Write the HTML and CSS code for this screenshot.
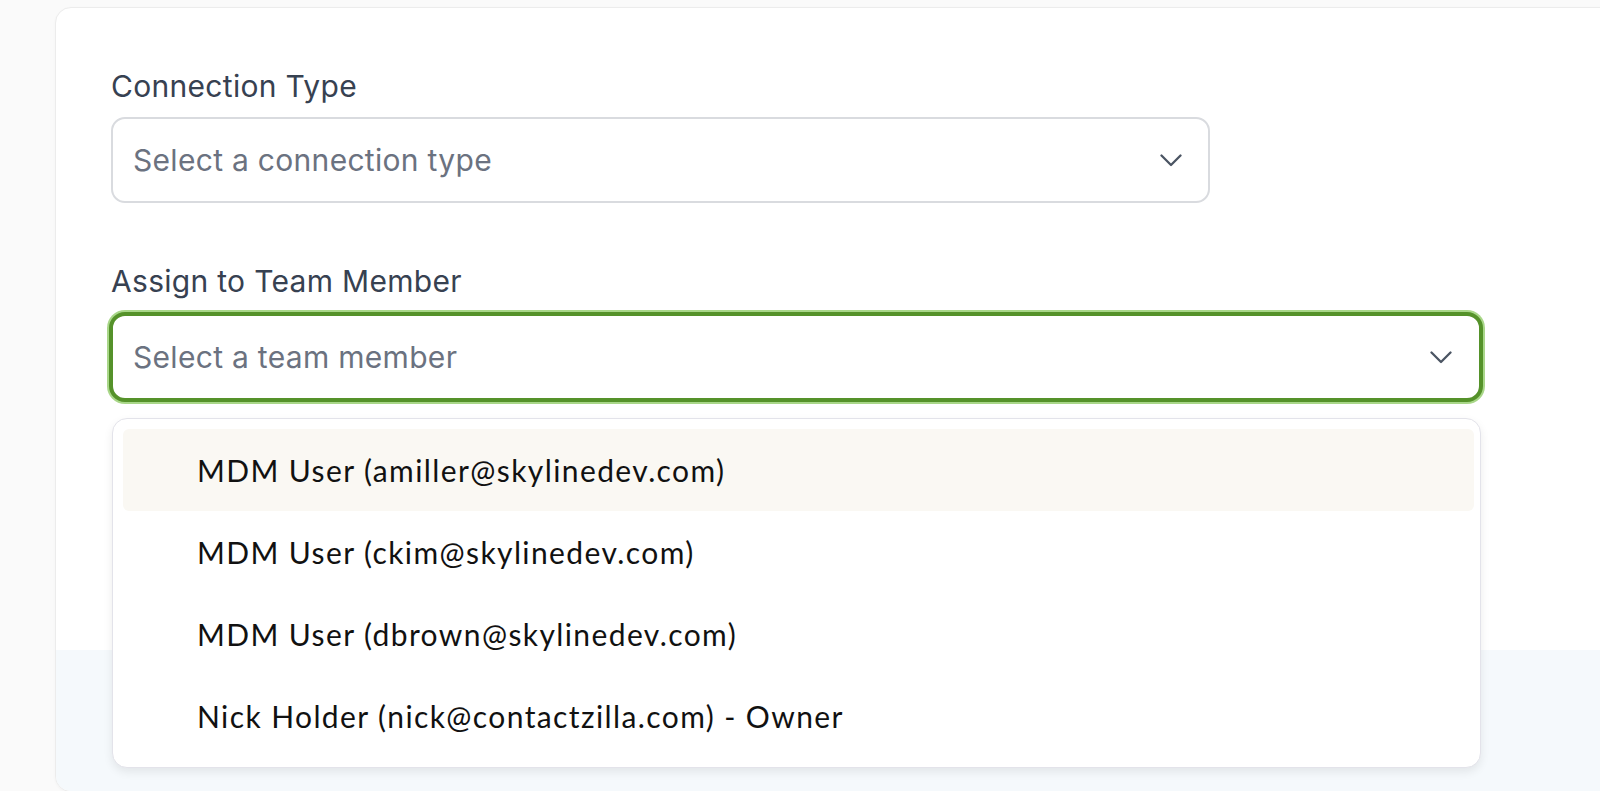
FILE: index.html
```html
<!DOCTYPE html>
<html lang="en">
<head>
    <meta charset="UTF-8">
    <meta name="viewport" content="width=device-width, initial-scale=1.0">
    <title>New Connection</title>
    <link rel="stylesheet" href="styles.css">
</head>
<body>
    <div class="card">
        <div class="card-body">
            <div class="field">
                <label class="label">Connection Type</label>
                <div class="select">
                    <span class="placeholder">Select a connection type</span>
                    <svg class="chevron" width="22" height="13" viewBox="0 0 22 13"><path d="M1.5 1.5 L11 11 L20.5 1.5" fill="none" stroke="#4b5563" stroke-width="2.3" stroke-linecap="round" stroke-linejoin="round"/></svg>
                </div>
            </div>

            <div class="field field-member">
                <label class="label">Assign to Team Member</label>
                <div class="select-wrap">
                    <div class="select select-wide focused">
                        <span class="placeholder">Select a team member</span>
                        <svg class="chevron" width="22" height="13" viewBox="0 0 22 13"><path d="M1.5 1.5 L11 11 L20.5 1.5" fill="none" stroke="#4b5563" stroke-width="2.3" stroke-linecap="round" stroke-linejoin="round"/></svg>
                    </div>
                    <!-- open options list -->
                    <ul class="menu">
                        <li class="option active">MDM User (amiller@skylinedev.com)</li>
                        <li class="option">MDM User (ckim@skylinedev.com)</li>
                        <li class="option">MDM User (dbrown@skylinedev.com)</li>
                        <li class="option">Nick Holder (nick@contactzilla.com) - Owner</li>
                    </ul>
                </div>
            </div>
        </div>
        <div class="card-footer"></div>
    </div>
</body>
</html>
```

FILE: styles.css
```css
body {
    margin: 0;
    background-color: #fafafa;
    font-family: Inter, "Open Sans", sans-serif;
    overflow: hidden;
}

.card {
    margin: 7px 0 0 55px;
    width: 1600px;
    height: 783px;
    background-color: #fff;
    border: 1px solid #ececec;
    border-radius: 16px;
    box-shadow: 0 1px 3px rgba(0, 0, 0, 0.03);
    overflow: hidden;
    display: flex;
    flex-direction: column;
}

.card-body {
    padding: 58px 0 0 55px;
    height: 584px;
}

.card-footer {
    flex: 1;
    background-color: #f5f9fc;
}

.field {
    display: flex;
    flex-direction: column;
    align-items: flex-start;
}

.field-member {
    margin-top: 58px;
}

.label {
    font-size: 30px;
    line-height: 40px;
    color: #374151;
    margin-bottom: 11px;
    letter-spacing: 0.3px;
}

.select {
    box-sizing: border-box;
    width: 1099px;
    height: 86px;
    border: 2px solid #d9dbdf;
    border-radius: 14px;
    background-color: #fff;
    padding: 0 26px 0 20px;
    display: flex;
    align-items: center;
    justify-content: space-between;
}

.placeholder {
    font-size: 30px;
    color: #6b7280;
    letter-spacing: 0.3px;
}

.select-wrap {
    position: relative;
    margin-left: -2px;
}

.select-wide {
    width: 1374px;
}

.focused {
    border: 4px solid #55922a;
    box-shadow: 0 0 0 2px #a9d789;
    padding-right: 27px;
    height: 90px;
    border-radius: 16px;
}

.menu {
    position: absolute;
    top: 106px;
    left: 3px;
    width: 1369px;
    box-sizing: border-box;
    margin: 0;
    padding: 10px 6px 10px 10px;
    list-style: none;
    background-color: #fff;
    border: 1px solid #e3e3ea;
    border-radius: 15px;
    box-shadow: 0 4px 10px rgba(0, 0, 0, 0.08);
}

.option {
    height: 82px;
    display: flex;
    align-items: center;
    padding-left: 74px;
    border-radius: 6px;
    font-family: Lato, "Open Sans", sans-serif;
    font-size: 30px;
    letter-spacing: 1.4px;
    color: #111;
}

.option.active {
    background-color: #faf8f3;
}
```
